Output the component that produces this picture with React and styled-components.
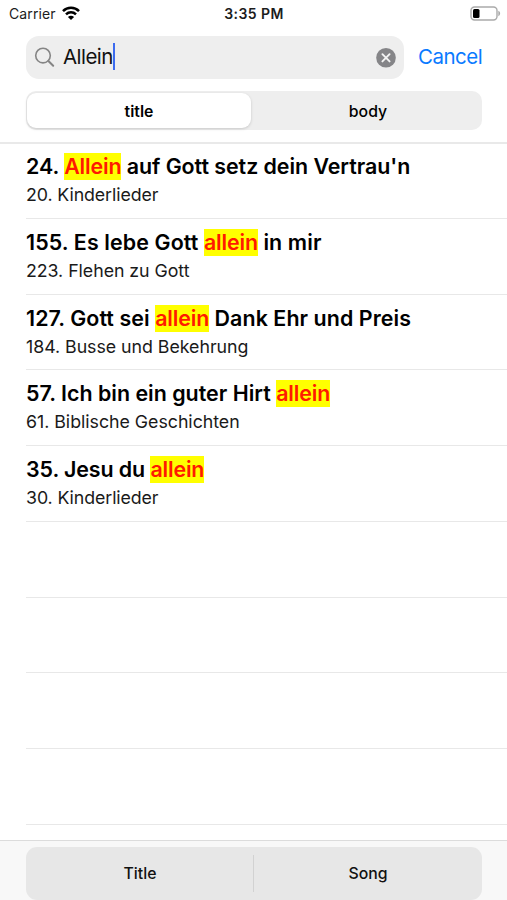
import React from 'react'
import styled, { createGlobalStyle } from 'styled-components'

const GlobalStyle = createGlobalStyle`
    body {
        margin: 0;
        background: #fff;
        font-family: Inter, "Liberation Sans", sans-serif;
        color: #000;
    }
`

const Screen = styled.div`
    display: flex;
    flex-direction: column;
    width: 507px;
    height: 900px;
    overflow: hidden;
    white-space: nowrap;
`

const StatusBar = styled.div`
    display: grid;
    grid-template-columns: 1fr auto 1fr;
    align-items: center;
    height: 27px;
    padding: 0 6px 0 9px;
    font-size: 14px;
    line-height: 27px;
    color: #1c1c1c;
`

const Carrier = styled.div`
    display: flex;
    align-items: center;
    gap: 6px;
    letter-spacing: 0.1px;

    svg {
        margin-bottom: 2px;
    }
`

const Clock = styled.div`
    margin-right: 2px;
    font-weight: 600;
    letter-spacing: 0.45px;
`

const BatteryIcon = styled.svg`
    justify-self: end;
    margin-bottom: 1px;
`

const Header = styled.div`
    box-sizing: border-box;
    height: 117px;
    padding: 9px 25px 0 26px;
    border-bottom: 2px solid #e9e9e9;
`

const SearchRow = styled.div`
    display: flex;
    align-items: center;
    height: 43px;
`

const SearchField = styled.div`
    display: flex;
    flex-shrink: 0;
    align-items: center;
    box-sizing: border-box;
    width: 378px;
    height: 43px;
    padding: 0 8px;
    border-radius: 13px;
    background: #eee;
`

const Query = styled.span`
    margin-left: 8px;
    padding-bottom: 3px;
    font-size: 20.5px;
    letter-spacing: -0.55px;
    color: #111;
`

const Caret = styled.span`
    width: 2px;
    height: 27px;
    margin-bottom: 3px;
    background: #3d6bef;
`

const ClearIcon = styled.svg`
    margin-left: auto;
`

const Cancel = styled.span`
    margin-left: 14px;
    padding-bottom: 3px;
    font-size: 20.5px;
    letter-spacing: -0.5px;
    color: #0a7aff;
`

const Scope = styled.div`
    display: grid;
    grid-template-columns: 1fr 1fr;
    height: 39px;
    margin-top: 12px;
    border-radius: 10px;
    background: #eee;
`

const ScopeItem = styled.div`
    height: 35px;
    margin: ${props => props.$active ? '2px 3px 2px 1px' : '2px 1px'};
    border-radius: 9px;
    font-size: 15.8px;
    line-height: 37px;
    text-align: center;
    font-weight: ${props => props.$active ? 600 : 500};
    background: ${props => props.$active ? '#fff' : 'transparent'};
    box-shadow: ${props => props.$active ? '0 1px 3px rgba(0, 0, 0, 0.16)' : 'none'};
`

const List = styled.div`
    flex: 1;
    min-height: 0;
    overflow: hidden;
    margin-top: -1px;
    padding-left: 26px;
`

const Row = styled.div`
    box-sizing: border-box;
    height: 75.75px;
    padding-top: 8px;
    border-bottom: 1px solid #e8e8e8;
`

const SongTitle = styled.div`
    height: 30px;
    font-size: 21.4px;
    font-weight: 600;
    line-height: 30px;
    letter-spacing: ${props => props.$tracking}px;

    mark {
        padding-bottom: 1px;
        color: #ff1a00;
        background: #ff0;
        letter-spacing: -0.15px;
    }
`

const SongBook = styled.div`
    margin-top: 1px;
    font-size: 17.8px;
    line-height: 26px;
    color: #1a1a1a;
    letter-spacing: ${props => props.$tracking}px;
`

const Toolbar = styled.div`
    box-sizing: border-box;
    height: 60px;
    padding: 6px 25px 0 26px;
    border-top: 1px solid #dcdcdc;
    background: #f8f8f8;
`

const Tabs = styled.div`
    display: flex;
    align-items: center;
    height: 53px;
    border-radius: 11px;
    background: #e7e7e7;
`

const Tab = styled.div`
    flex: 1;
    font-size: 15.8px;
    font-weight: 500;
    line-height: 37px;
    text-align: center;
    color: #111;

    & + & {
        margin-left: -1px;
        border-left: 1px solid #d2d2d2;
    }
`

const songs = [
    { number: 24, before: '', hit: 'Allein', after: " auf Gott setz dein Vertrau'n", book: '20. Kinderlieder', tracking: -0.04, bookTracking: -0.1 },
    { number: 155, before: 'Es lebe Gott ', hit: 'allein', after: ' in mir', book: '223. Flehen zu Gott', tracking: 0.12, bookTracking: -0.05 },
    { number: 127, before: 'Gott sei ', hit: 'allein', after: ' Dank Ehr und Preis', book: '184. Busse und Bekehrung', tracking: 0.08, bookTracking: -0.04 },
    { number: 57, before: 'Ich bin ein guter Hirt ', hit: 'allein', after: '', book: '61. Biblische Geschichten', tracking: 0.02, bookTracking: -0.03 },
    { number: 35, before: 'Jesu du ', hit: 'allein', after: '', book: '30. Kinderlieder', tracking: -0.09, bookTracking: -0.1 },
]

const emptyRows = [0, 1, 2, 3]

const Wifi = () => (
    <svg width="18" height="14" viewBox="0 0 18 14" fill="none" stroke="#000" strokeWidth="2.5">
        <path d="M1 5.2C5.4.7 12.6.7 17 5.2" />
        <path d="M4 8.4c2.8-2.8 7.2-2.8 10 0" />
        <path d="M9 14L5.9 10.9c1.7-1.6 4.5-1.6 6.2 0z" fill="#000" stroke="none" />
    </svg>
)

const Battery = () => (
    <BatteryIcon width="31" height="15" viewBox="0 0 31 15">
        <rect x="1" y="1" width="26" height="13" rx="3.5" fill="none" stroke="#aaa" strokeWidth="1.4" />
        <rect x="3" y="3" width="6.5" height="9" rx="1.5" fill="#000" />
        <path d="M28.3 4.8c2.4.8 2.4 4.6 0 5.4z" fill="#aaa" />
    </BatteryIcon>
)

const Search = () => (
    <svg width="21" height="21" viewBox="0 0 21 21" fill="none" stroke="#858585" strokeLinecap="round">
        <circle cx="9" cy="8.6" r="7.3" strokeWidth="1.6" />
        <path d="M14.4 14l4.8 4.8" strokeWidth="2" />
    </svg>
)

const Clear = () => (
    <ClearIcon width="20" height="20" viewBox="0 0 20 20">
        <circle cx="10" cy="9.8" r="9.8" fill="#858588" />
        <path d="M6.4 6.2l7.2 7.2M13.6 6.2l-7.2 7.2" stroke="#f4f4f4" strokeWidth="1.9" strokeLinecap="round" />
    </ClearIcon>
)

const App = () => {
    return (
        <Screen>
            <GlobalStyle />
            <StatusBar>
                <Carrier>
                    Carrier <Wifi />
                </Carrier>
                <Clock>3:35 PM</Clock>
                <Battery />
            </StatusBar>

            <Header>
                <SearchRow>
                    <SearchField>
                        <Search />
                        <Query>Allein</Query>
                        <Caret />
                        <Clear />
                    </SearchField>
                    <Cancel>Cancel</Cancel>
                </SearchRow>
                <Scope>
                    <ScopeItem $active>title</ScopeItem>
                    <ScopeItem>body</ScopeItem>
                </Scope>
            </Header>

            <List>
                {
                    songs.map( song => (
                        <Row key={song.number}>
                            <SongTitle $tracking={song.tracking}>
                                {song.number}. {song.before}<mark>{song.hit}</mark>{song.after}
                            </SongTitle>
                            <SongBook $tracking={song.bookTracking}>{song.book}</SongBook>
                        </Row>
                    ))
                }
                {
                    emptyRows.map( row => <Row key={row} />)
                }
            </List>

            <Toolbar>
                <Tabs>
                    <Tab>Title</Tab>
                    <Tab>Song</Tab>
                </Tabs>
            </Toolbar>
        </Screen>
    )
}

export default App
